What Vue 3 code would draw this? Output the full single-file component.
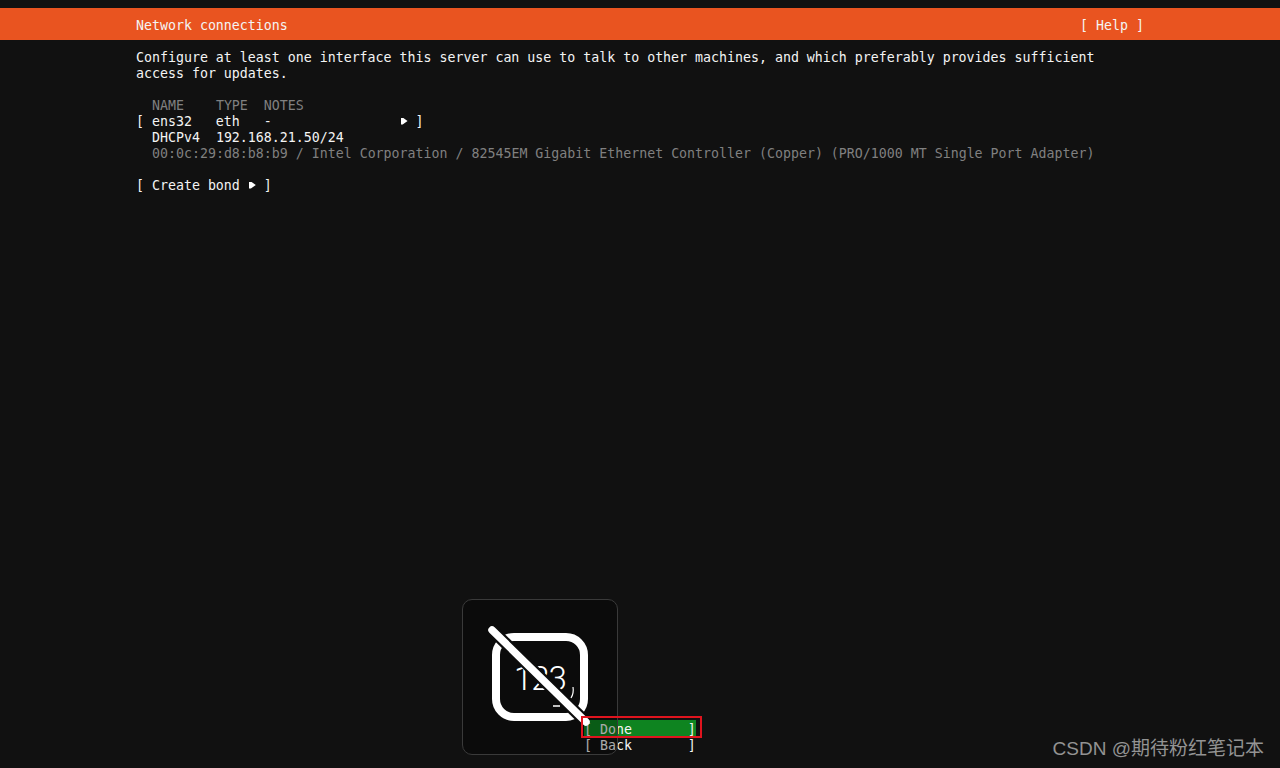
<script setup>
const columns = 'NAME    TYPE  NOTES'
const row = 'ens32   eth   -                '
const overviewLine = 'DHCPv4  192.168.21.50/24'
const mac = '00:0c:29:d8:b8:b9 / Intel Corporation / 82545EM Gigabit Ethernet Controller (Copper) (PRO/1000 MT Single Port Adapter)'
const done = '[ Done       ]'
const back = '[ Back       ]'
</script>

<template>
  <div class="screen">
    <header class="title-bar">
      <span>Network connections</span>
      <span>[ Help ]</span>
    </header>

    <main class="body">
      <p class="intro">Configure at least one interface this server can use to talk to other machines, and which preferably provides sufficient<br>access for updates.</p>

      <div class="table">
        <div class="line dim indent">{{ columns }}</div>
        <div class="line">[ {{ row }}<i class="arrow"></i> ]</div>
        <div class="line indent">{{ overviewLine }}</div>
        <div class="line dim indent">{{ mac }}</div>
      </div>

      <div class="line">[ Create bond <i class="arrow"></i> ]</div>
    </main>

    <footer class="actions">
      <div class="button focused">{{ done }}</div>
      <div class="button">{{ back }}</div>
    </footer>

    <div class="osd">
      <svg class="osd-icon" width="156" height="156" viewBox="0 0 156 156">
        <rect x="34" y="38" width="88" height="80" rx="18" fill="none" stroke="#fff" stroke-width="8" />
        <text x="52" y="91" class="osd-text">123</text>
        <path d="M111 88 Q112 94 109 99" fill="none" stroke="#fff" stroke-width="1.2" />
        <path d="M91 107 H98" stroke="#fff" stroke-width="1.5" />
        <path d="M29 30 L125 124" stroke="#0c0c0c" stroke-width="12" />
        <path d="M30 31 L124 123" stroke="#fff" stroke-width="7.5" stroke-linecap="round" />
      </svg>
    </div>

    <div class="highlight"></div>
    <div class="watermark">CSDN @期待粉红笔记本</div>
  </div>
</template>

<style>
html, body { margin: 0; background: #111111; }
</style>

<style scoped>
.screen {
  position: relative;
  width: 1280px;
  height: 768px;
  overflow: hidden;
  display: flex;
  flex-direction: column;
  background: #111111;
  color: #f4f4f4;
  font-family: "DejaVu Sans Mono", "Liberation Mono", monospace;
  font-size: 13.28px;
  line-height: 16px;
  white-space: pre;
}
.title-bar {
  margin-top: 8px;
  height: 32px;
  box-sizing: border-box;
  padding: 10px 136px 6px;
  background: #e95420;
  display: flex;
  justify-content: space-between;
}
.body {
  flex: 1;
  padding: 10px 136px 0;
}
.intro { margin: 0 0 16px; }
.table { margin-bottom: 16px; }
.line { height: 16px; }
.indent { padding-left: 16px; }
.dim { color: #808080; }
.arrow {
  display: inline-block;
  width: 7px;
  height: 7px;
  margin-left: 1px;
  vertical-align: 1.5px;
  background: #fff;
  clip-path: polygon(0 0, 30% 0, 100% 50%, 30% 100%, 0 100%);
}
.actions {
  padding: 0 0 16px 584px;
}
.button { width: 112px; height: 16px; line-height: 20px; }
.focused { background: #0e8420; }
.osd {
  position: absolute;
  left: 462px;
  top: 599px;
  width: 156px;
  height: 156px;
  box-sizing: border-box;
  border: 1px solid #3a3a3a;
  border-radius: 10px;
  background: rgba(0, 0, 0, 0.3);
}
.osd-icon { position: absolute; left: -1px; top: -1px; overflow: visible; }
.osd-text { font-family: "Roboto", "Liberation Sans", sans-serif; font-size: 33px; font-weight: 300; letter-spacing: -1px; fill: #fff; }
.highlight {
  position: absolute;
  left: 581px;
  top: 716px;
  width: 121px;
  height: 22px;
  box-sizing: border-box;
  border: 2px solid #e0141e;
}
.watermark {
  position: absolute;
  right: 16px;
  top: 737px;
  font-family: "Liberation Sans", "Noto Sans CJK SC", sans-serif;
  font-size: 19px;
  line-height: 24px;
  color: #939393;
}
</style>
